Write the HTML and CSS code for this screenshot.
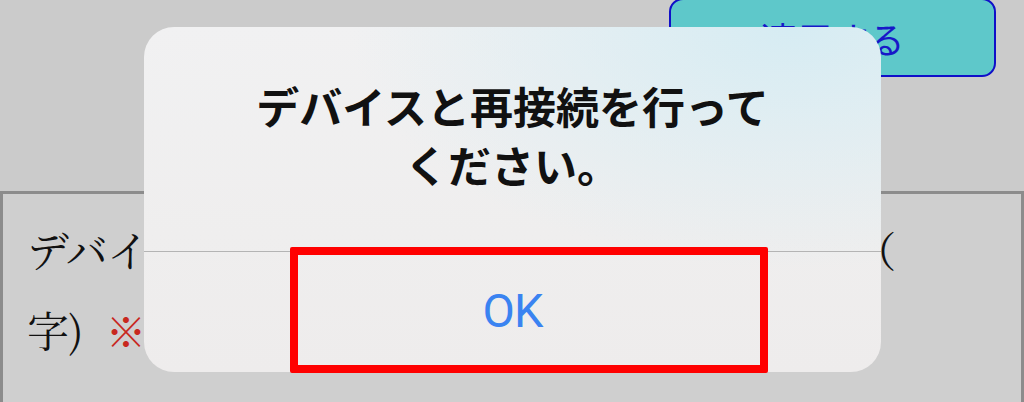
FILE: index.html
```html
<!DOCTYPE html>
<html lang="ja">
<head>
<meta charset="utf-8">
<title>デバイス設定</title>
<link rel="stylesheet" href="styles.css">
</head>
<body>
<div class="screen">
  <div class="toolbar">
    <button class="apply" type="button">適用する</button>
  </div>
  <section class="panel">
    <p class="label">デバイス名を入力してください。最大20文字（<br>字) <span class="note">※必須項目です</span></p>
  </section>

  <div class="alert" role="alertdialog">
    <div class="alert-body">
      <p class="alert-title">デバイスと再接続を行って<br>ください。</p>
    </div>
    <div class="alert-actions">
      <span class="alert-ok">OK</span>
    </div>
  </div>
  <div class="highlight"></div>
</div>
</body>
</html>
```
FILE: styles.css
```css
* { box-sizing: border-box; }
html, body { margin: 0; padding: 0; }
body {
  width: 1024px;
  height: 402px;
  overflow: hidden;
  background: #cbcbcb;
  font-family: "Noto Sans CJK JP", "Noto Sans", sans-serif;
}
.screen {
  position: relative;
  width: 1024px;
  height: 402px;
  display: flex;
  flex-direction: column;
}
.toolbar {
  height: 191px;
  display: flex;
  justify-content: flex-end;
  align-items: flex-start;
  padding-right: 28px;
}
.apply {
  margin-top: -2px;
  width: 327px;
  height: 79px;
  border: 2px solid #1010c8;
  border-radius: 14px;
  background: #5ec8ca;
  color: #1818c8;
  font-family: "Noto Sans CJK JP", sans-serif;
  font-size: 36px;
  font-weight: 400;
  padding: 0;
  display: flex;
  align-items: center;
  justify-content: center;
}
.panel {
  flex: 1;
  border: 3px solid #8c8c8c;
  border-bottom: none;
  background: #cfcfcf;
  padding: 15px 0 0 24px;
}
.label {
  margin: 0;
  font-family: "Noto Serif CJK JP", "Liberation Serif", "Noto Sans CJK JP", serif;
  font-size: 42px;
  line-height: 80px;
  letter-spacing: -0.7px;
  color: #111;
  white-space: nowrap;
}
.note {
  color: #c8281e;
  font-size: 40px;
  margin-left: 13px;
}
.alert {
  position: absolute;
  left: 144px;
  top: 27px;
  width: 737px;
  height: 345px;
  border-radius: 30px;
  overflow: hidden;
  background:
    radial-gradient(ellipse 60% 70% at 88% 0%, rgba(214, 236, 243, 1) 0%, rgba(214, 236, 243, 0) 100%),
    linear-gradient(180deg, #f1f1f2 0%, #efeeee 60%, #eeecec 100%);
  display: flex;
  flex-direction: column;
}
.alert-body {
  height: 225px;
  border-bottom: 1px solid #b4b4b4;
  padding-top: 49px;
}
.alert-title {
  margin: 0;
  text-align: center;
  font-family: "Noto Sans CJK JP", sans-serif;
  font-weight: 700;
  font-size: 43px;
  line-height: 59px;
  color: #111;
}
.alert-actions {
  flex: 1;
  display: flex;
  align-items: center;
  justify-content: center;
  padding-bottom: 4px;
}
.alert-ok {
  font-family: Roboto, "Liberation Sans", sans-serif;
  font-size: 47px;
  color: #3a83f1;
  letter-spacing: -1px;
}
.highlight {
  position: absolute;
  left: 290px;
  top: 247px;
  width: 478px;
  height: 126px;
  border: 8px solid #ff0000;
  border-radius: 2px;
}
```
